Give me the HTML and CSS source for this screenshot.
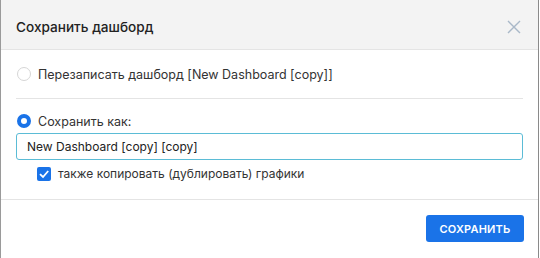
FILE: index.html
```html
<!DOCTYPE html>
<html lang="ru">
<head>
    <meta charset="UTF-8">
    <meta name="viewport" content="width=device-width, initial-scale=1.0">
    <title>Сохранить дашборд</title>
    <link rel="stylesheet" href="styles.css">
</head>
<body>
    <div class="modal">
        <div class="modal-header">
            <h2>Сохранить дашборд</h2>
            <button class="close" aria-label="Закрыть">
                <svg width="14" height="14" viewBox="0 0 14 14">
                    <path d="M1 1 L13 13 M13 1 L1 13" stroke="#a9b8c8" stroke-width="1.4" fill="none"/>
                </svg>
            </button>
        </div>

        <div class="modal-body">
            <label class="radio-row">
                <span class="radio"></span>
                Перезаписать дашборд [New Dashboard [copy]]
            </label>

            <hr class="divider">

            <label class="radio-row">
                <span class="radio checked"></span>
                Сохранить как:
            </label>

            <div class="name-input">New Dashboard [copy] [copy]</div>

            <label class="check-row">
                <span class="checkbox">
                    <svg width="14" height="14" viewBox="0 0 14 14">
                        <path d="M3 7.2 L6 10 L11.2 4" stroke="#fff" stroke-width="1.8" fill="none"/>
                    </svg>
                </span>
                также копировать (дублировать) графики
            </label>
        </div>

        <div class="modal-footer">
            <button class="save">СОХРАНИТЬ</button>
        </div>
    </div>
</body>
</html>
```

FILE: styles.css
```css
body {
    margin: 0;
    background: #ffffff;
    font-family: Inter, 'Noto Sans', sans-serif;
    color: #333;
}

.modal {
    width: 537px;
    height: 258px;
    background: #fff;
    border-left: 1px solid #9a9a9a;
    border-right: 1px solid #8a8a8a;
    display: flex;
    flex-direction: column;
}

.modal-header {
    height: 49px;
    background: #f3f3f3;
    border-bottom: 1px solid #e4e4e4;
    display: flex;
    align-items: center;
    justify-content: space-between;
    padding: 0 14px 0 15px;
}

.modal-header h2 {
    margin: 0;
    font-size: 13.6px;
    font-weight: 500;
    color: #222;
    padding-top: 4px;
}

.close {
    background: none;
    border: none;
    padding: 0;
    width: 20px;
    height: 20px;
    display: flex;
    align-items: center;
    justify-content: center;
    margin-top: 4px;
}

.modal-body {
    padding: 15px 15px 0;
    height: 134px;
}

.radio-row {
    display: flex;
    align-items: center;
    gap: 7px;
    font-size: 12.5px;
    height: 18px;
    padding-left: 1px;
}

.radio {
    width: 12px;
    height: 12px;
    border: 1px solid #d6d6d6;
    border-radius: 50%;
    background: #fff;
}

.radio.checked {
    width: 6px;
    height: 6px;
    border: 4px solid #1a73e8;
}

.divider {
    border: none;
    border-top: 1px solid #e4e4e4;
    margin: 15px 0 13px;
}

.name-input {
    margin-top: 3px;
    height: 25px;
    border: 1px solid #5bbcd6;
    border-radius: 3px;
    padding: 0 10px;
    font-size: 12px;
    line-height: 25px;
    color: #222;
}

.check-row {
    display: flex;
    align-items: center;
    gap: 7px;
    font-size: 12px;
    margin-top: 6px;
    padding-left: 21px;
}

.checkbox {
    width: 14px;
    height: 14px;
    background: #1a73e8;
    border-radius: 2px;
    display: flex;
    align-items: center;
    justify-content: center;
}

.modal-footer {
    border-top: 1px solid #e4e4e4;
    flex: 1;
    display: flex;
    justify-content: flex-end;
    align-items: flex-start;
    padding: 15px 14px 0;
}

.save {
    background: #1a73e8;
    color: #fff;
    border: none;
    border-radius: 3px;
    width: 98px;
    height: 27px;
    font-family: Inter, 'Noto Sans', sans-serif;
    font-size: 11px;
    font-weight: 600;
    letter-spacing: 0.2px;
}
```
